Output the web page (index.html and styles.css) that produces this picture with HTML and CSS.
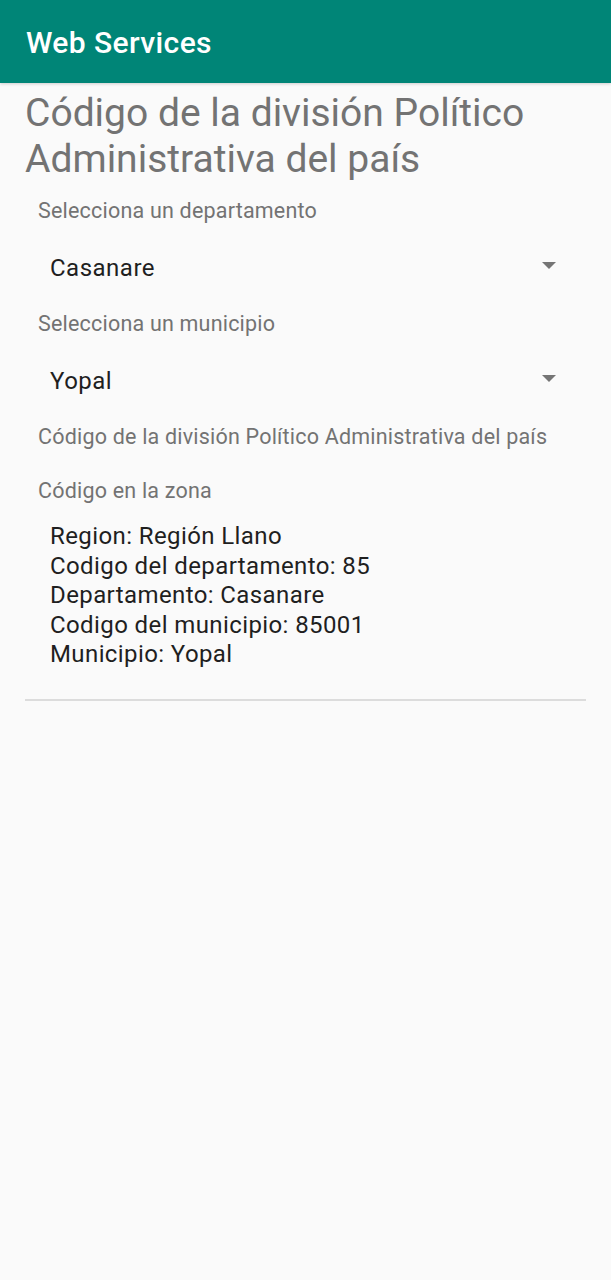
FILE: index.html
```html
<!DOCTYPE html>
<html lang="es">
<head>
<meta charset="utf-8">
<title>Web Services</title>
<link rel="stylesheet" href="styles.css">
</head>
<body>
<header class="appbar"><span class="appbar-title">Web Services</span></header>
<main class="content">
  <h1 class="heading">Código de la división Político Administrativa del país</h1>
  <div class="label">Selecciona un departamento</div>
  <div class="spinner">
    <span class="spinner-text">Casanare</span>
    <svg class="arrow" width="14" height="7" viewBox="0 0 14 7"><path d="M0 0H14L7 7Z" fill="#757575"/></svg>
  </div>
  <div class="label">Selecciona un municipio</div>
  <div class="spinner">
    <span class="spinner-text">Yopal</span>
    <svg class="arrow" width="14" height="7" viewBox="0 0 14 7"><path d="M0 0H14L7 7Z" fill="#757575"/></svg>
  </div>
  <div class="label">Código de la división Político Administrativa del país</div>
  <div class="label label-gap">Código en la zona</div>
  <div class="result">
    <div>Region: Región Llano</div>
    <div>Codigo del departamento: 85</div>
    <div>Departamento: Casanare</div>
    <div>Codigo del municipio: 85001</div>
    <div>Municipio: Yopal</div>
  </div>
  <hr class="divider">
</main>
</body>
</html>
```
FILE: styles.css
```css
html, body {
  margin: 0;
  padding: 0;
  background: #fafafa;
  font-family: Roboto, "Noto Sans", sans-serif;
}
.appbar {
  height: 83px;
  background: #008577;
  box-shadow: 0 1px 3px rgba(0,0,0,0.18);
  padding: 3px 0 0 26px;
  box-sizing: border-box;
  display: flex;
  align-items: center;
}
.appbar-title {
  color: #ffffff;
  font-size: 30px;
  font-weight: 500;
  line-height: 34px;
  letter-spacing: 0.4px;
}
.content {
  padding: 0 25px;
}
.heading {
  margin: 7px 0 0;
  font-size: 39px;
  font-weight: 400;
  line-height: 46px;
  color: #737373;
}
.label {
  margin: 17px 0 0 13px;
  font-size: 21.5px;
  line-height: 24px;
  letter-spacing: 0.2px;
  color: #737373;
}
.spinner + .label { margin-top: 0; }
.label-gap { margin-top: 30px; }
.spinner {
  display: flex;
  align-items: center;
  justify-content: space-between;
  padding: 30px 30px 29px 25px;
}
.spinner-text {
  font-size: 24px;
  line-height: 30px;
  letter-spacing: 0.5px;
  color: #1f1f1f;
}
.arrow {
  display: block;
  margin-top: -5px;
}
.result {
  margin: 19px 0 0 25px;
  font-size: 24px;
  line-height: 29.5px;
  letter-spacing: 0.4px;
  color: #1f1f1f;
}
.divider {
  margin: 29.5px 0 0;
  border: 0;
  height: 2px;
  background: #dcdcdc;
}
```
